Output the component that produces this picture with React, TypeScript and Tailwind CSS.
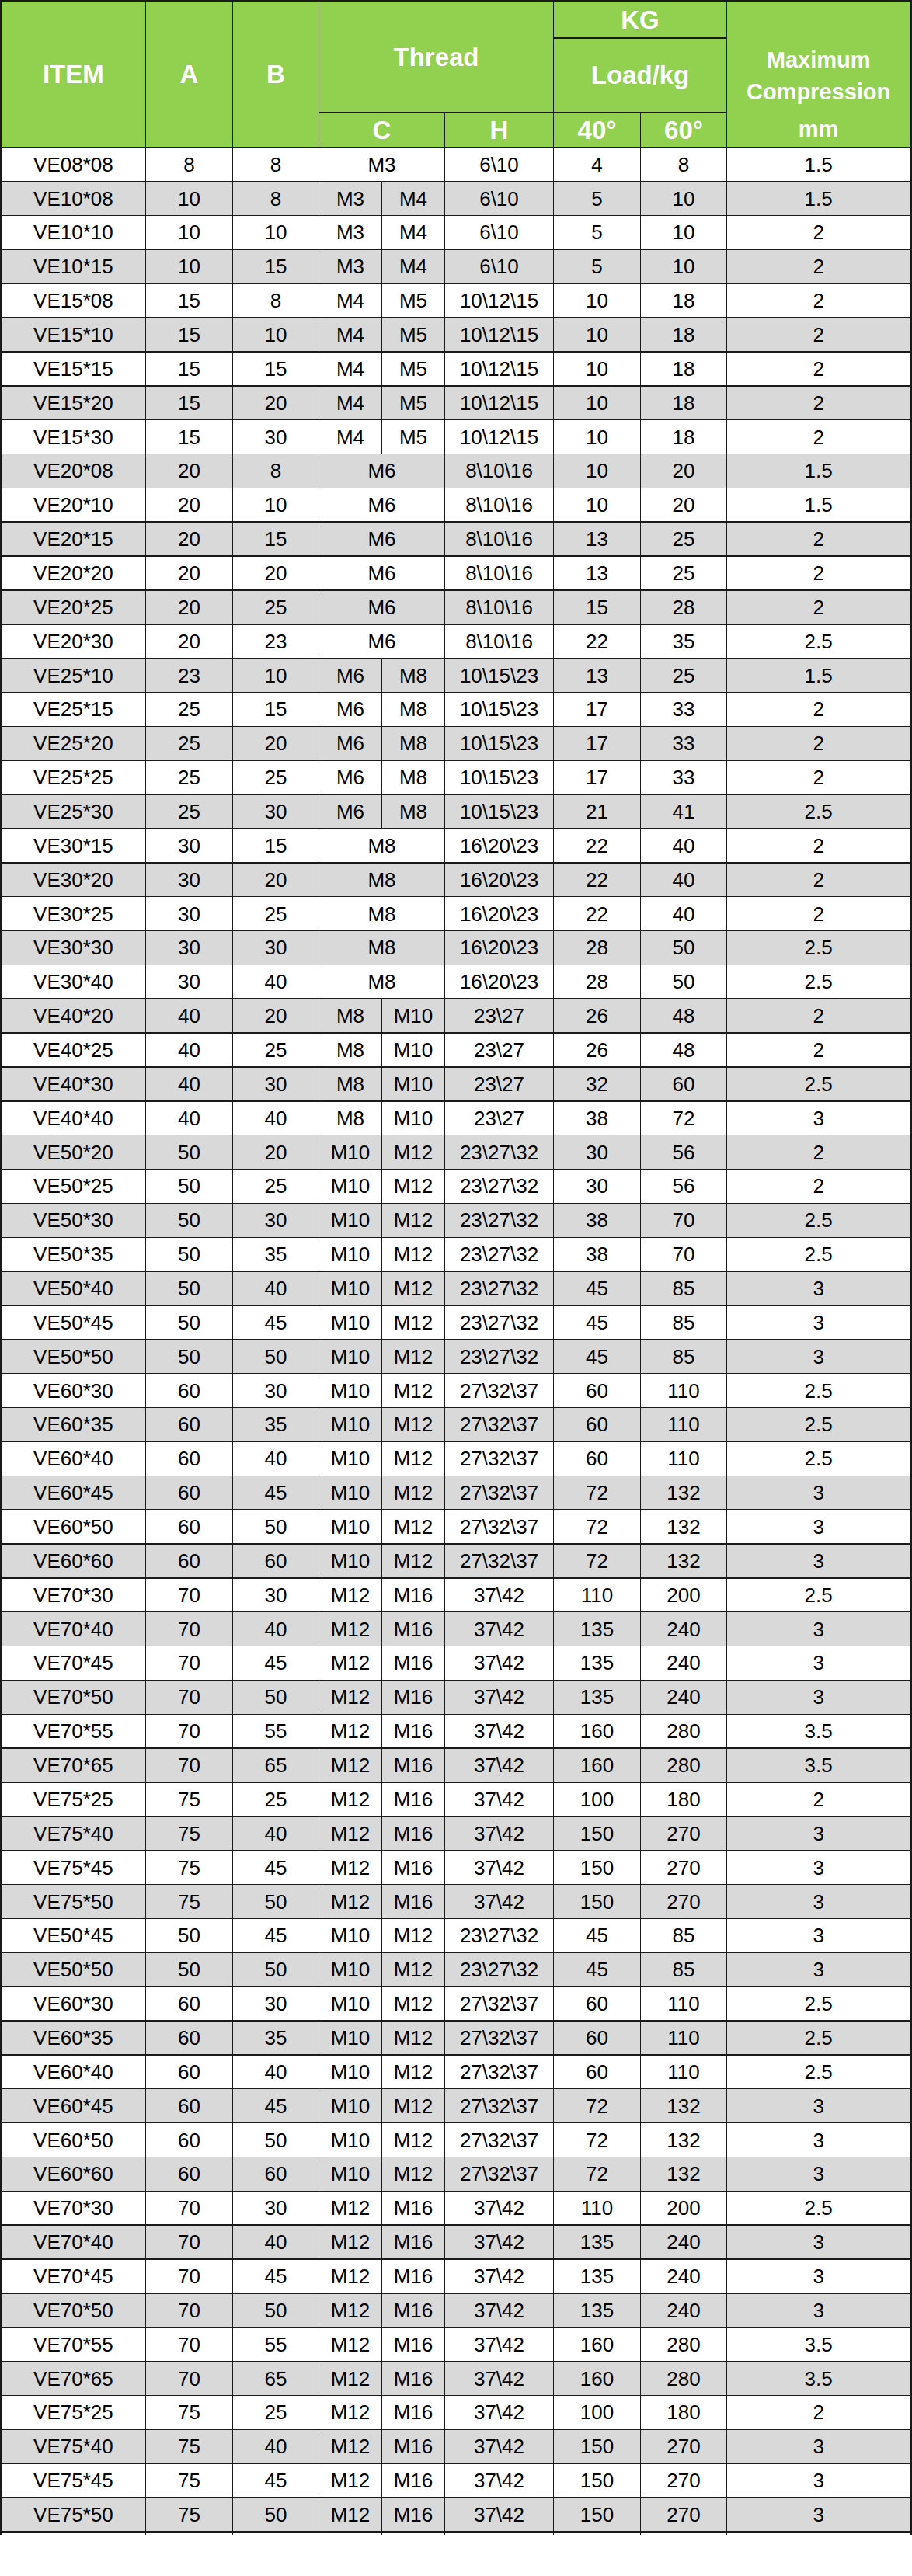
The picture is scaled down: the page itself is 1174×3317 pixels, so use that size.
import React from "react";

type Row = [string, string, string, string[], string, string, string, string];

const base: Row[] = [
  ["VE08*08", "8", "8", ["M3"], "6\\10", "4", "8", "1.5"],
  ["VE10*08", "10", "8", ["M3", "M4"], "6\\10", "5", "10", "1.5"],
  ["VE10*10", "10", "10", ["M3", "M4"], "6\\10", "5", "10", "2"],
  ["VE10*15", "10", "15", ["M3", "M4"], "6\\10", "5", "10", "2"],
  ["VE15*08", "15", "8", ["M4", "M5"], "10\\12\\15", "10", "18", "2"],
  ["VE15*10", "15", "10", ["M4", "M5"], "10\\12\\15", "10", "18", "2"],
  ["VE15*15", "15", "15", ["M4", "M5"], "10\\12\\15", "10", "18", "2"],
  ["VE15*20", "15", "20", ["M4", "M5"], "10\\12\\15", "10", "18", "2"],
  ["VE15*30", "15", "30", ["M4", "M5"], "10\\12\\15", "10", "18", "2"],
  ["VE20*08", "20", "8", ["M6"], "8\\10\\16", "10", "20", "1.5"],
  ["VE20*10", "20", "10", ["M6"], "8\\10\\16", "10", "20", "1.5"],
  ["VE20*15", "20", "15", ["M6"], "8\\10\\16", "13", "25", "2"],
  ["VE20*20", "20", "20", ["M6"], "8\\10\\16", "13", "25", "2"],
  ["VE20*25", "20", "25", ["M6"], "8\\10\\16", "15", "28", "2"],
  ["VE20*30", "20", "23", ["M6"], "8\\10\\16", "22", "35", "2.5"],
  ["VE25*10", "23", "10", ["M6", "M8"], "10\\15\\23", "13", "25", "1.5"],
  ["VE25*15", "25", "15", ["M6", "M8"], "10\\15\\23", "17", "33", "2"],
  ["VE25*20", "25", "20", ["M6", "M8"], "10\\15\\23", "17", "33", "2"],
  ["VE25*25", "25", "25", ["M6", "M8"], "10\\15\\23", "17", "33", "2"],
  ["VE25*30", "25", "30", ["M6", "M8"], "10\\15\\23", "21", "41", "2.5"],
  ["VE30*15", "30", "15", ["M8"], "16\\20\\23", "22", "40", "2"],
  ["VE30*20", "30", "20", ["M8"], "16\\20\\23", "22", "40", "2"],
  ["VE30*25", "30", "25", ["M8"], "16\\20\\23", "22", "40", "2"],
  ["VE30*30", "30", "30", ["M8"], "16\\20\\23", "28", "50", "2.5"],
  ["VE30*40", "30", "40", ["M8"], "16\\20\\23", "28", "50", "2.5"],
  ["VE40*20", "40", "20", ["M8", "M10"], "23\\27", "26", "48", "2"],
  ["VE40*25", "40", "25", ["M8", "M10"], "23\\27", "26", "48", "2"],
  ["VE40*30", "40", "30", ["M8", "M10"], "23\\27", "32", "60", "2.5"],
  ["VE40*40", "40", "40", ["M8", "M10"], "23\\27", "38", "72", "3"],
  ["VE50*20", "50", "20", ["M10", "M12"], "23\\27\\32", "30", "56", "2"],
  ["VE50*25", "50", "25", ["M10", "M12"], "23\\27\\32", "30", "56", "2"],
  ["VE50*30", "50", "30", ["M10", "M12"], "23\\27\\32", "38", "70", "2.5"],
  ["VE50*35", "50", "35", ["M10", "M12"], "23\\27\\32", "38", "70", "2.5"],
  ["VE50*40", "50", "40", ["M10", "M12"], "23\\27\\32", "45", "85", "3"],
  ["VE50*45", "50", "45", ["M10", "M12"], "23\\27\\32", "45", "85", "3"],
  ["VE50*50", "50", "50", ["M10", "M12"], "23\\27\\32", "45", "85", "3"],
  ["VE60*30", "60", "30", ["M10", "M12"], "27\\32\\37", "60", "110", "2.5"],
  ["VE60*35", "60", "35", ["M10", "M12"], "27\\32\\37", "60", "110", "2.5"],
  ["VE60*40", "60", "40", ["M10", "M12"], "27\\32\\37", "60", "110", "2.5"],
  ["VE60*45", "60", "45", ["M10", "M12"], "27\\32\\37", "72", "132", "3"],
  ["VE60*50", "60", "50", ["M10", "M12"], "27\\32\\37", "72", "132", "3"],
  ["VE60*60", "60", "60", ["M10", "M12"], "27\\32\\37", "72", "132", "3"],
  ["VE70*30", "70", "30", ["M12", "M16"], "37\\42", "110", "200", "2.5"],
  ["VE70*40", "70", "40", ["M12", "M16"], "37\\42", "135", "240", "3"],
  ["VE70*45", "70", "45", ["M12", "M16"], "37\\42", "135", "240", "3"],
  ["VE70*50", "70", "50", ["M12", "M16"], "37\\42", "135", "240", "3"],
  ["VE70*55", "70", "55", ["M12", "M16"], "37\\42", "160", "280", "3.5"],
  ["VE70*65", "70", "65", ["M12", "M16"], "37\\42", "160", "280", "3.5"],
  ["VE75*25", "75", "25", ["M12", "M16"], "37\\42", "100", "180", "2"],
  ["VE75*40", "75", "40", ["M12", "M16"], "37\\42", "150", "270", "3"],
  ["VE75*45", "75", "45", ["M12", "M16"], "37\\42", "150", "270", "3"],
  ["VE75*50", "75", "50", ["M12", "M16"], "37\\42", "150", "270", "3"],
];

const rows: Row[] = [...base, ...base.slice(34, 52)];

const H = "flex items-center justify-center bg-[#92d050] text-white font-bold text-[33px] leading-none";

function Cell({ children, grey, span }: { children: React.ReactNode; grey: boolean; span?: boolean }) {
  return (
    <div
      className={
        "flex items-center justify-center text-[26px] leading-none text-black " +
        (grey ? "bg-[#d9d9d9] " : "bg-white ") +
        (span ? "col-span-2" : "")
      }
    >
      {children}
    </div>
  );
}

export default function App() {
  return (
    <div className="w-[1174px] min-h-[3317px] bg-white font-['Liberation_Sans',Arial,sans-serif]">
      <div className="grid w-[1174px] bg-[#1a1a1a] pt-[2px] pl-[2px] pr-[3px] gap-[1.5px] grid-cols-[184.75px_110.5px_109.5px_79.5px_79.5px_138.5px_110.5px_109.5px_234.75px] grid-rows-[46px_94.5px_43.5px_repeat(70,42.37px)_3px]">
        <div className={H + " row-span-3"}>ITEM</div>
        <div className={H + " row-span-3"}>A</div>
        <div className={H + " row-span-3"}>B</div>
        <div className={H + " col-span-3 row-span-2"}>Thread</div>
        <div className={H + " col-span-2"}>KG</div>
        <div className="row-span-3 flex flex-col bg-[#92d050] text-white font-bold text-[29px]">
          <div className="h-[47.5px]" />
          <div className="h-[96px] flex flex-col items-center justify-center leading-[41px]">
            <span>Maximum</span>
            <span>Compression</span>
          </div>
          <div className="flex-1 flex items-center justify-center leading-none pb-[2px]">mm</div>
        </div>
        <div className={H + " col-span-2"}>Load/kg</div>
        <div className={H + " col-span-2"}>C</div>
        <div className={H}>H</div>
        <div className={H}>40°</div>
        <div className={H}>60°</div>

        {rows.map((r, i) => {
          const grey = i % 2 === 1;
          return (
            <React.Fragment key={i}>
              <Cell grey={grey}>{r[0]}</Cell>
              <Cell grey={grey}>{r[1]}</Cell>
              <Cell grey={grey}>{r[2]}</Cell>
              {r[3].length === 1 ? (
                <Cell grey={grey} span>
                  {r[3][0]}
                </Cell>
              ) : (
                <>
                  <Cell grey={grey}>{r[3][0]}</Cell>
                  <Cell grey={grey}>{r[3][1]}</Cell>
                </>
              )}
              <Cell grey={grey}>{r[4]}</Cell>
              <Cell grey={grey}>{r[5]}</Cell>
              <Cell grey={grey}>{r[6]}</Cell>
              <Cell grey={grey}>{r[7]}</Cell>
            </React.Fragment>
          );
        })}
        {Array.from({ length: 9 }).map((_, i) => (
          <div key={"t" + i} className="bg-white" />
        ))}
      </div>
    </div>
  );
}
